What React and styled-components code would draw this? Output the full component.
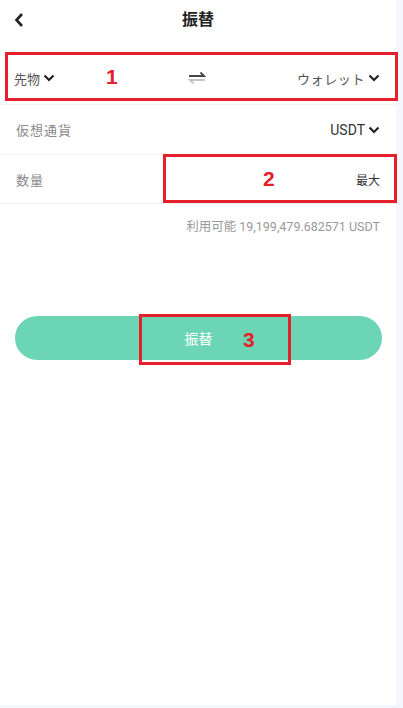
import styled, { createGlobalStyle } from "styled-components";

const GlobalStyle = createGlobalStyle`
  *, *::before, *::after {
    box-sizing: border-box;
  }
  html, body {
    margin: 0;
    padding: 0;
    background: #f6f7fc;
  }
  body {
    font-family: Roboto, "Noto Sans CJK JP", sans-serif;
  }
`;

const Page = styled.div`
  position: relative;
  width: 396px;
  height: 705px;
  background: #ffffff;
  color: #333;
`;

const Header = styled.div`
  height: 40px;
  display: flex;
  align-items: center;
  justify-content: center;
  position: relative;
`;

const BackBtn = styled.div`
  position: absolute;
  left: 14px;
  top: 11px;
  width: 16px;
  height: 18px;
  display: flex;
  align-items: center;
`;

const Title = styled.h1`
  margin: 0;
  font-size: 16px;
  font-weight: 700;
  color: #222;
  margin-top: -4px;
`;

const TransferRow = styled.div`
  margin-top: 12px;
  height: 52px;
  padding: 0 16px 0 14px;
  display: grid;
  grid-template-columns: 1fr auto 1fr;
  align-items: center;
`;

const Select = styled.div`
  display: flex;
  align-items: center;
  justify-content: ${(p) => (p.$end ? "flex-end" : "flex-start")};
  gap: 3px;
  font-size: ${(p) => p.$size || "13px"};
  color: ${(p) => p.$color || "#555"};
  letter-spacing: ${(p) => p.$spacing || "0"};
`;

const Row = styled.div`
  height: 50px;
  padding: 0 16px 0 16px;
  display: flex;
  align-items: center;
  justify-content: space-between;
  border-top: 1px solid #f3f3f3;
  ${(p) => p.$last && "border-bottom: 1px solid #f3f3f3;"}
`;

const Label = styled.span`
  font-size: 13px;
  color: #8a8a8a;
  letter-spacing: 1px;
`;

const MaxText = styled.span`
  font-size: 12px;
  color: #333;
`;

const Available = styled.div`
  padding: 15px 16px 0 0;
  text-align: right;
  font-size: 12.5px;
  color: #999;
  line-height: 16px;
`;

const SubmitWrap = styled.div`
  padding: 81px 14px 0 15px;
`;

const SubmitBtn = styled.button`
  display: block;
  width: 100%;
  height: 44px;
  border: none;
  border-radius: 22px;
  background: #6cd5b5;
  color: #fff;
  font-family: Roboto, "Noto Sans CJK JP", sans-serif;
  font-size: 14px;
  padding: 0;
`;

const Mark = styled.div`
  position: absolute;
  left: ${(p) => p.$x}px;
  top: ${(p) => p.$y}px;
  width: ${(p) => p.$w}px;
  height: ${(p) => p.$h}px;
  border: 3px solid #e3202b;
  pointer-events: none;
`;

const MarkNum = styled.span`
  position: absolute;
  left: ${(p) => p.$x}px;
  top: ${(p) => p.$y}px;
  color: #e3202b;
  font-family: "Liberation Sans", Arial, sans-serif;
  font-weight: 700;
  font-size: 21px;
  line-height: 20px;
`;

const Chevron = () => (
  <svg width="12" height="8" viewBox="0 0 12 8">
    <path d="M1.5 1.5 L6 6 L10.5 1.5" fill="none" stroke="#222" strokeWidth="2.2" />
  </svg>
);

const SwapIcon = () => (
  <svg width="18" height="14" viewBox="0 0 18 14">
    <path d="M1 5 H16 L12.5 1.5" fill="none" stroke="#444" strokeWidth="1.8" />
    <path d="M17 9 H2 L5.5 12.5" fill="none" stroke="#c4c4c4" strokeWidth="1.8" />
  </svg>
);

export default function App() {
  return (
    <>
      <GlobalStyle />
      <Page>
        <Header>
          <BackBtn>
            <svg width="10" height="16" viewBox="0 0 10 16">
              <path d="M8 2 L2.5 8 L8 14" fill="none" stroke="#222" strokeWidth="2.6" />
            </svg>
          </BackBtn>
          <Title>振替</Title>
        </Header>

        <TransferRow>
          <Select>
            先物
            <Chevron />
          </Select>
          <SwapIcon />
          <Select $end $spacing="0.6px">
            ウォレット
            <Chevron />
          </Select>
        </TransferRow>

        <Row>
          <Label>仮想通貨</Label>
          <Select $color="#333" $size="14px">
            USDT
            <Chevron />
          </Select>
        </Row>
        <Row $last>
          <Label>数量</Label>
          <MaxText>最大</MaxText>
        </Row>

        <Available>利用可能 19,199,479.682571 USDT</Available>

        <SubmitWrap>
          <SubmitBtn>振替</SubmitBtn>
        </SubmitWrap>

        <Mark $x={5} $y={52} $w={393} $h={49} />
        <MarkNum $x={106} $y={67}>1</MarkNum>
        <Mark $x={163} $y={154} $w={234} $h={49} />
        <MarkNum $x={263} $y={169}>2</MarkNum>
        <Mark $x={139} $y={314} $w={152} $h={51} />
        <MarkNum $x={243} $y={330}>3</MarkNum>
      </Page>
    </>
  );
}
